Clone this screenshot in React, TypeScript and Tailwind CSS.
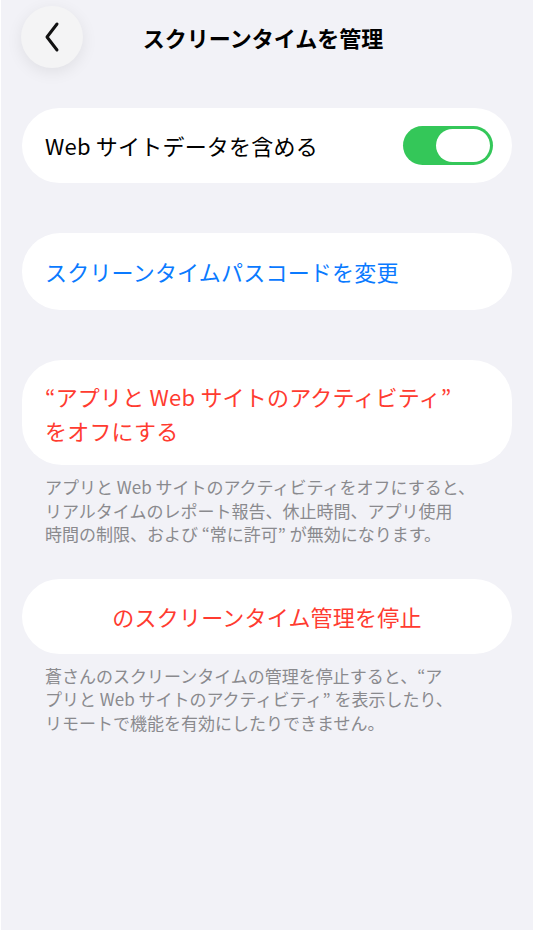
import React from 'react';

const font = { fontFamily: '"Noto Sans CJK JP", "Noto Sans", sans-serif' };

const App: React.FC = () => {
  return (
    <div className="min-h-[930px] w-full bg-[#f2f2f7] border-l border-white" style={font}>
      {/* ヘッダー */}
      <div className="flex items-center justify-between pl-[20px] pr-[28px] pt-[6px]">
        <button className="flex h-[62px] w-[62px] items-center justify-center rounded-full bg-[#f4f4f5] shadow-[0_4px_16px_rgba(0,0,0,0.08)]">
          <svg width="24" height="32" viewBox="0 0 24 32" fill="none">
            <path d="M17 3 L7 16 L17 29" stroke="#111" strokeWidth="3" strokeLinecap="round" strokeLinejoin="round" />
          </svg>
        </button>
        <h1 className="text-[22px] font-bold text-black">スクリーンタイムを管理</h1>
        <div className="h-[62px] w-[62px]" />
      </div>

      <div className="flex flex-col px-[21px] pt-[40px]">
        {/* Webサイトデータ */}
        <div className="flex h-[75px] items-center justify-between rounded-[38px] bg-white pl-[23px] pr-[19px]">
          <span className="text-[22px] tracking-[0.2px] text-black">Web サイトデータを含める</span>
          <div className="flex h-[39px] w-[90px] items-center justify-end rounded-full bg-[#34c759] pr-[3px]">
            <div className="h-[33px] w-[54px] rounded-full bg-white" />
          </div>
        </div>

        {/* パスコード */}
        <div className="mt-[50px] flex h-[77px] items-center rounded-[38px] bg-white px-[23px]">
          <span className="text-[22px] tracking-[0.2px] text-[#0a7aff]">スクリーンタイムパスコードを変更</span>
        </div>

        {/* アクティビティをオフ */}
        <div className="mt-[50px] flex h-[105px] items-center rounded-[40px] bg-white px-[23px]">
          <span className="text-[22px] leading-[34px] tracking-[0.2px] text-[#ff3b30]">
            “アプリと Web サイトのアクティビティ”
            <br />
            をオフにする
          </span>
        </div>
        <p className="px-[23px] pt-[10px] text-[17px] leading-[23.5px] text-[#8a8a8e]">
          アプリと Web サイトのアクティビティをオフにすると、
          <br />
          リアルタイムのレポート報告、休止時間、アプリ使用
          <br />
          時間の制限、および “常に許可” が無効になります。
        </p>

        {/* 管理を停止 */}
        <div className="mt-[33px] flex h-[75px] items-center justify-center rounded-[38px] bg-white px-[23px]">
          <span className="text-[22px] tracking-[0.2px] text-[#ff3b30]">のスクリーンタイム管理を停止</span>
        </div>
        <p className="px-[23px] pt-[10px] text-[17px] leading-[23.5px] text-[#8a8a8e]">
          蒼さんのスクリーンタイムの管理を停止すると、“ア
          <br />
          プリと Web サイトのアクティビティ” を表示したり、
          <br />
          リモートで機能を有効にしたりできません。
        </p>
      </div>
    </div>
  );
};

export default App;
